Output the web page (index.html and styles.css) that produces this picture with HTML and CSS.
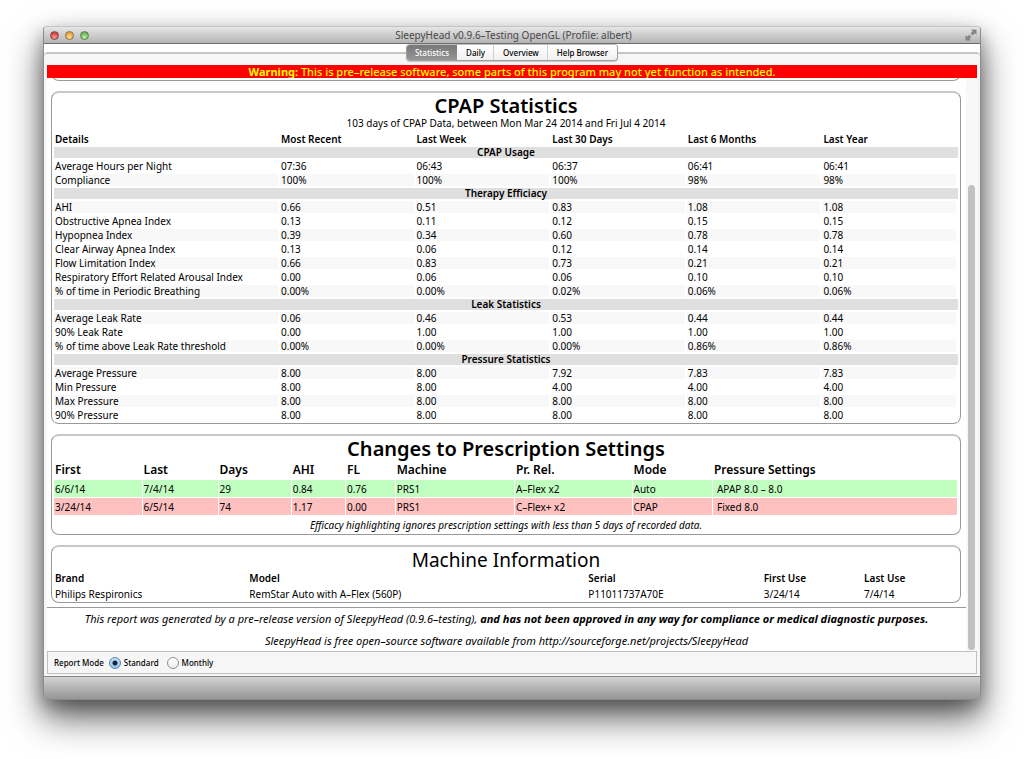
FILE: index.html
```html
<!DOCTYPE html>
<html lang="en">
<head>
<meta charset="utf-8">
<title>SleepyHead v0.9.6-Testing OpenGL (Profile: albert)</title>
<link rel="stylesheet" href="styles.css">
</head>
<body>
<div class="window">
  <header class="titlebar">
    <div class="lights">
      <button class="light close" aria-label="Close"></button>
      <button class="light minimise" aria-label="Minimise"></button>
      <button class="light maximise" aria-label="Zoom"></button>
    </div>
    <div class="title">SleepyHead v0.9.6–Testing OpenGL (Profile: albert)</div>
    <button class="fullscreen" aria-label="Full screen">
      <svg width="12" height="12" viewBox="0 0 12 12"><path d="M6 0.5h5.5V6L9.8 4.3 7.7 6.4 5.6 4.3 7.7 2.2zM6 11.5H.5V6l1.7 1.7 2-2 2.1 2.1-2 2z" fill="#858585"/></svg>
    </button>
  </header>
  <nav class="tabs">
    <div class="tab-group">
      <button class="tab active">Statistics</button>
      <button class="tab">Daily</button>
      <button class="tab">Overview</button>
      <button class="tab">Help Browser</button>
    </div>
  </nav>
  <main class="pane">
    <div class="warning"><b>Warning:</b> This is pre–release software, some parts of this program may not yet function as intended.</div>
    <div class="viewport">
      <div class="report">
        <section class="card previous"></section>
        <section class="card stats-card">
          <h1>CPAP Statistics</h1>
          <p class="range">103 days of CPAP Data, between Mon Mar 24 2014 and Fri Jul 4 2014</p>
          <table class="stats">
            <thead><tr><th>Details</th><th>Most Recent</th><th>Last Week</th><th>Last 30 Days</th><th>Last 6 Months</th><th>Last Year</th></tr></thead>
            <tbody>
              <tr class="group"><th colspan="6">CPAP Usage</th></tr>
              <tr><td>Average Hours per Night</td><td>07:36</td><td>06:43</td><td>06:37</td><td>06:41</td><td>06:41</td></tr>
              <tr class="alt"><td>Compliance</td><td>100%</td><td>100%</td><td>100%</td><td>98%</td><td>98%</td></tr>
              <tr class="group"><th colspan="6">Therapy Efficiacy</th></tr>
              <tr class="alt"><td>AHI</td><td>0.66</td><td>0.51</td><td>0.83</td><td>1.08</td><td>1.08</td></tr>
              <tr><td>Obstructive Apnea Index</td><td>0.13</td><td>0.11</td><td>0.12</td><td>0.15</td><td>0.15</td></tr>
              <tr class="alt"><td>Hypopnea Index</td><td>0.39</td><td>0.34</td><td>0.60</td><td>0.78</td><td>0.78</td></tr>
              <tr><td>Clear Airway Apnea Index</td><td>0.13</td><td>0.06</td><td>0.12</td><td>0.14</td><td>0.14</td></tr>
              <tr class="alt"><td>Flow Limitation Index</td><td>0.66</td><td>0.83</td><td>0.73</td><td>0.21</td><td>0.21</td></tr>
              <tr><td>Respiratory Effort Related Arousal Index</td><td>0.00</td><td>0.06</td><td>0.06</td><td>0.10</td><td>0.10</td></tr>
              <tr class="alt"><td>% of time in Periodic Breathing</td><td>0.00%</td><td>0.00%</td><td>0.02%</td><td>0.06%</td><td>0.06%</td></tr>
              <tr class="group"><th colspan="6">Leak Statistics</th></tr>
              <tr class="alt"><td>Average Leak Rate</td><td>0.06</td><td>0.46</td><td>0.53</td><td>0.44</td><td>0.44</td></tr>
              <tr><td>90% Leak Rate</td><td>0.00</td><td>1.00</td><td>1.00</td><td>1.00</td><td>1.00</td></tr>
              <tr class="alt"><td>% of time above Leak Rate threshold</td><td>0.00%</td><td>0.00%</td><td>0.00%</td><td>0.86%</td><td>0.86%</td></tr>
              <tr class="group"><th colspan="6">Pressure Statistics</th></tr>
              <tr class="alt"><td>Average Pressure</td><td>8.00</td><td>8.00</td><td>7.92</td><td>7.83</td><td>7.83</td></tr>
              <tr><td>Min Pressure</td><td>8.00</td><td>8.00</td><td>4.00</td><td>4.00</td><td>4.00</td></tr>
              <tr class="alt"><td>Max Pressure</td><td>8.00</td><td>8.00</td><td>8.00</td><td>8.00</td><td>8.00</td></tr>
              <tr><td>90% Pressure</td><td>8.00</td><td>8.00</td><td>8.00</td><td>8.00</td><td>8.00</td></tr>
            </tbody>
          </table>
        </section>
        <section class="card">
          <h1>Changes to Prescription Settings</h1>
          <table class="changes">
            <colgroup><col class="c-first"><col class="c-last"><col class="c-days"><col class="c-ahi"><col class="c-fl"><col class="c-machine"><col class="c-relief"><col class="c-mode"><col></colgroup>
            <thead><tr><th>First</th><th>Last</th><th>Days</th><th>AHI</th><th>FL</th><th>Machine</th><th>Pr. Rel.</th><th>Mode</th><th>Pressure Settings</th></tr></thead>
            <tbody>
              <tr class="best"><td>6/6/14</td><td>7/4/14</td><td>29</td><td>0.84</td><td>0.76</td><td>PRS1</td><td>A–Flex x2</td><td>Auto</td><td>APAP 8.0 – 8.0</td></tr>
              <tr class="worst"><td>3/24/14</td><td>6/5/14</td><td>74</td><td>1.17</td><td>0.00</td><td>PRS1</td><td>C–Flex+ x2</td><td>CPAP</td><td>Fixed 8.0</td></tr>
            </tbody>
          </table>
          <p class="note">Efficacy highlighting ignores prescription settings with less than 5 days of recorded data.</p>
        </section>
        <section class="card">
          <h1 class="plain">Machine Information</h1>
          <table class="machines">
            <colgroup><col class="m-brand"><col class="m-model"><col class="m-serial"><col class="m-first"><col></colgroup>
            <thead><tr><th>Brand</th><th>Model</th><th>Serial</th><th>First Use</th><th>Last Use</th></tr></thead>
            <tbody><tr><td>Philips Respironics</td><td>RemStar Auto with A–Flex (560P)</td><td>P11011737A70E</td><td>3/24/14</td><td>7/4/14</td></tr></tbody>
          </table>
        </section>
        <footer class="legal">
          <p>This report was generated by a pre–release version of SleepyHead (0.9.6–testing), <b>and has not been approved in any way for compliance or medical diagnostic purposes.</b></p>
          <p>SleepyHead is free open–source software available from http://sourceforge.net/projects/SleepyHead</p>
        </footer>
      </div>
      <div class="track"><div class="thumb"></div></div>
    </div>
    <form class="modes">
      <span>Report Mode</span>
      <label><input type="radio" name="mode" checked>Standard</label>
      <label><input type="radio" name="mode">Monthly</label>
    </form>
  </main>
  <div class="statusbar"></div>
</div>
</body>
</html>
```
FILE: styles.css
```css
* { box-sizing: border-box; }
body {
  margin: 0;
  height: 100vh;
  padding: 26px 43px 59px;
  overflow: hidden;
  background: #fff;
  color: #000;
  font: 10px/12px "Noto Sans", "Open Sans", sans-serif;
}
h1, p { margin: 0; }
button { font: inherit; padding: 0; border: 0; background: none; }

.window {
  display: flex;
  flex-direction: column;
  height: 100%;
  border: 1px solid #8c8c8c;
  border-top-color: #c4c4c4;
  border-radius: 4px;
  background: #fff;
  box-shadow: 0 18px 36px rgba(0, 0, 0, .6), 0 8px 18px rgba(0, 0, 0, .3);
}

.titlebar {
  display: grid;
  grid-template-columns: 60px 1fr 60px;
  align-items: center;
  height: 17px;
  flex: none;
  padding: 0 3px 0 6px;
  border-bottom: 1px solid #6e6e6e;
  border-radius: 3px 3px 0 0;
  background: linear-gradient(#e6e6e6, #b4b4b4);
}
.lights { display: flex; gap: 6px; }
.light {
  width: 9px;
  height: 9px;
  border: 1px solid #75504e;
  border-radius: 50%;
}
.close { background: radial-gradient(circle at 50% 80%, #ff9d98, #d93c3f 70%); }
.minimise { border-color: #91713f; background: radial-gradient(circle at 50% 80%, #ffe49a, #e9a03f 70%); }
.maximise { border-color: #5b8050; background: radial-gradient(circle at 50% 80%, #c8f0a8, #69b354 70%); }
.title { text-align: center; color: #484848; }
.fullscreen { justify-self: end; height: 12px; }
.fullscreen svg { display: block; }

.tabs {
  position: relative;
  display: flex;
  justify-content: center;
  flex: none;
  margin-bottom: -9px;
}
.tab-group {
  display: flex;
  height: 17px;
  border: 1px solid #a0a0a0;
  border-top-color: #c0c0c0;
  border-radius: 4px;
  background: linear-gradient(#fff, #f0f0f0);
  box-shadow: 0 1px 1px rgba(0, 0, 0, .2);
  overflow: hidden;
  font-size: 8px;
  font-weight: 500;
}
.tab { padding: 0 9px; line-height: 15px; }
.tab + .tab { box-shadow: inset -1px 0 #d0d0d0; }
.tab:last-child { box-shadow: none; }
.tab.active {
  padding: 0 8px;
  background: linear-gradient(#777, #969696);
  color: #fff;
}

.pane {
  display: flex;
  flex-direction: column;
  flex: 1;
  min-height: 0;
  padding: 11px 3px 2px;
  border-top: 2px solid #c6c6c6;
  border-radius: 4px 4px 0 0;
  background: #f6f6f6;
}
.warning {
  flex: none;
  height: 13px;
  background: #f00;
  color: #ff0;
  font-size: 11px;
  font-weight: 500;
  line-height: 13px;
  text-align: center;
}
.warning b { font-weight: 700; }
.viewport {
  display: flex;
  flex: 1;
  min-height: 0;
  overflow: hidden;
  background: #fff;
}
.report { flex: 1; min-width: 0; }
.track { width: 11px; padding: 107px 2px 1px; background: #f8f8f8; }
.thumb { height: 100%; border-radius: 4px; background: #c1c1c1; }

.card {
  margin: 0 5px 10px 4px;
  padding: 3px 2px 0;
  border: 1px solid #999;
  border-top: 2px solid #c8c8c8;
  border-radius: 8px;
}
.previous { height: 32px; margin-top: -29px; }
h1 { font-size: 20px; font-weight: 600; line-height: 20px; text-align: center; }
h1.plain { font-size: 19px; font-weight: 400; }
.range { line-height: 15px; text-align: center; }
.stats-card { padding-bottom: 1px; }

table { width: 100%; table-layout: fixed; border-spacing: 0; }
th, td { padding: 0 1px; text-align: left; white-space: nowrap; }
th { font-weight: 600; }
.stats th, .stats td {
  width: 15%;
  height: 14px;
  border: solid #fff;
  border-width: 1px 2px 1px 0;
  background-clip: padding-box;
}
.stats thead th { height: 15px; }
.stats th:first-child, .stats td:first-child { width: 25%; }
.stats .group th { height: 13px; line-height: 11px; border-right: 0; background-color: #dfdfdf; text-align: center; }
.alt td { background-color: #f8f8f8; }

.changes th { height: 21px; font-size: 12px; line-height: 18px; }
.changes td { height: 18px; border: solid #fff; border-width: 0 1px 1px 0; background-clip: padding-box; }
.changes td:last-child { padding-left: 4px; }
.best td { background-color: #c0ffc0; }
.worst td { background-color: #ffc0c0; }
.c-first { width: 9.8%; }
.c-last { width: 8.4%; }
.c-days { width: 8.1%; }
.c-ahi { width: 6%; }
.c-fl { width: 5.5%; }
.c-machine { width: 13.2%; }
.c-relief { width: 13%; }
.c-mode { width: 8.9%; }
.note { font-style: italic; line-height: 18px; text-align: center; }

.machines th, .machines td { height: 16px; }
.m-brand { width: 21.5%; }
.m-model { width: 37.5%; }
.m-serial { width: 19.4%; }
.m-first { width: 11.1%; }

.legal {
  margin-top: -6px;
  border-top: 1px solid #999;
  font-size: 11px;
  font-style: italic;
  line-height: 22px;
  text-align: center;
  white-space: nowrap;
}

.modes {
  display: flex;
  align-items: center;
  gap: 8px;
  flex: none;
  height: 23px;
  padding: 0 6px;
  border: 1px solid #c0c0c0;
  font-size: 8px;
  font-weight: 500;
}
.modes span { margin-right: -3px; }
.modes label { display: flex; align-items: center; gap: 3px; }
.modes input {
  appearance: none;
  width: 12px;
  height: 12px;
  margin: 0;
  border: 1px solid #8f8f8f;
  border-radius: 50%;
  background: linear-gradient(#fff, #eee);
}
.modes input:checked {
  border-color: #5d7fa8;
  background: radial-gradient(circle, #12233c 2px, transparent 3px), linear-gradient(#c5e0f8, #8fc6f5);
}
.statusbar {
  flex: none;
  height: 23px;
  border-top: 1px solid #888;
  border-radius: 0 0 3px 3px;
  background: linear-gradient(#d2d2d2, #969696);
}
```
